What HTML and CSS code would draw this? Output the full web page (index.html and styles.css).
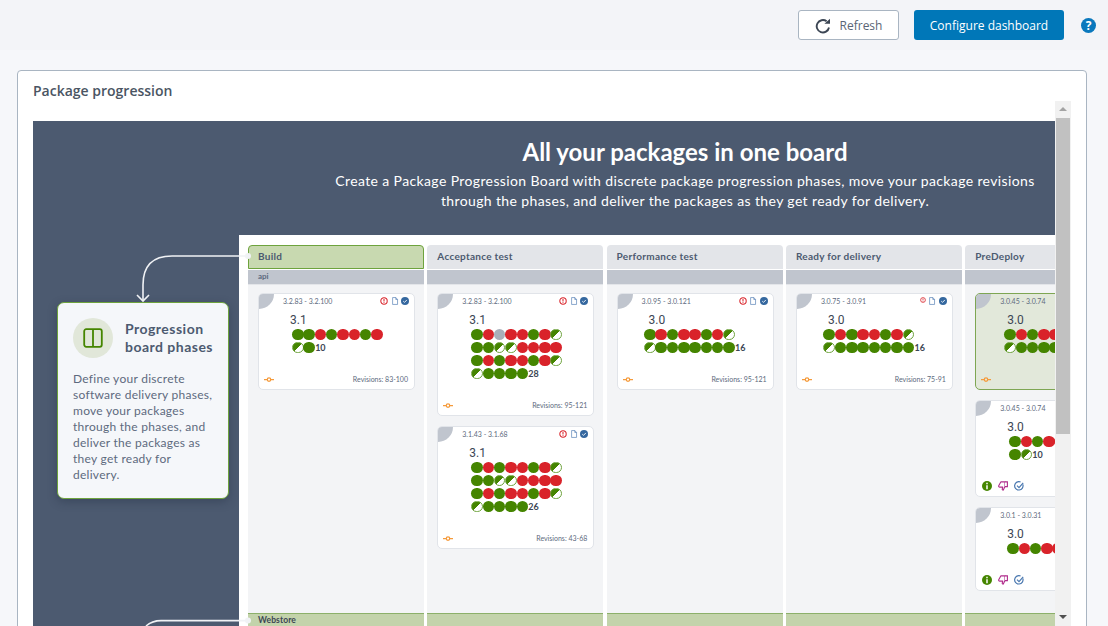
FILE: index.html
```html
<!DOCTYPE html>
<html lang="en">
<head>
<meta charset="utf-8">
<title>Package progression</title>
<link rel="stylesheet" href="styles.css">
</head>
<body>
<svg class="sprites" width="0" height="0" aria-hidden="true">
  <symbol id="i-alert" viewBox="0 0 10 10"><circle cx="5" cy="5" r="4" fill="none" stroke="#d9232a" stroke-width="1.3"/><path d="M5 2.6v3M5 6.6v1" stroke="#d9232a" stroke-width="1.3"/></symbol>
  <symbol id="i-doc" viewBox="0 0 10 10"><path d="M2 .7h4l2.2 2.4v6.2H2zM6 .7v2.4h2.2" fill="#fff" stroke="#4a78b0" stroke-width=".8"/></symbol>
  <symbol id="i-done" viewBox="0 0 10 10"><circle cx="5" cy="5" r="5" fill="#35689f"/><path d="M2.8 5.2l1.6 1.5 2.9-3" fill="none" stroke="#fff" stroke-width="1.1"/></symbol>
  <symbol id="i-track" viewBox="0 0 12 6"><path d="M0 3h3.6M8.4 3H12" stroke="#f59b3c" stroke-width="1.5"/><circle cx="6" cy="3" r="2.1" fill="none" stroke="#f59b3c" stroke-width="1.5"/></symbol>
  <symbol id="i-info" viewBox="0 0 10 10"><circle cx="5" cy="5" r="5" fill="#458500"/><path d="M5 1.8v1.4M5 4.2v4" stroke="#fff" stroke-width="1.5"/></symbol>
  <symbol id="i-down" viewBox="0 0 10 10"><path d="M2.8 .9h4.2v4.7L5.3 9.1c-.9 0-1.2-.6-1-1.3l.4-1.7H1.7C.9 6.1.5 5.5.7 4.8z" fill="#fff" stroke="#b02c8c" stroke-width="1.1" stroke-linejoin="round"/><path d="M7 .9h2.4v4.7H7" fill="#fff" stroke="#b02c8c" stroke-width="1.1"/></symbol>
  <symbol id="i-verify" viewBox="0 0 10 10"><path d="M8.8 3.4A4.2 4.2 0 1 1 6.6 1" fill="none" stroke="#4a78b0" stroke-width="1.2"/><path d="M3 4.6l2 2L9.2 1.8" fill="none" stroke="#4a78b0" stroke-width="1.2"/></symbol>
</svg>

<header class="topbar">
  <button class="btn btn-ghost" type="button">
    <svg class="btn-icon" viewBox="0 0 16 16"><path d="M14 9.5A6.2 6.2 0 1 1 11.6 3.3" fill="none" stroke="#3c4654" stroke-width="1.9"/><path d="M9.4 5.8H15V.7z" fill="#3c4654"/></svg>
    Refresh
  </button>
  <button class="btn btn-primary" type="button">Configure dashboard</button>
  <span class="help">?</span>
</header>

<main class="content">
  <section class="panel">
    <h2 class="panel-title">Package progression</h2>
    <div class="scroller">
      <div class="scroll-area">
        <div class="hero">
          <svg class="connectors" viewBox="0 0 300 505" width="300" height="505" aria-hidden="true">
            <path d="M214 135H139Q110 135 110 164V179" fill="none" stroke="#f0f2f5" stroke-width="1.6"/>
            <path d="M104 174l6 6 6-6" fill="none" stroke="#f0f2f5" stroke-width="1.6"/>
            <circle cx="215" cy="135" r="3" fill="#f0f2f5"/>
            <path d="M214 499.6H128Q119 499.6 113 505" fill="none" stroke="#f0f2f5" stroke-width="1.6"/>
            <circle cx="215" cy="499.6" r="3" fill="#f0f2f5"/>
          </svg>
          <div class="hero-head">
            <h1>All your packages in one board</h1>
            <p>Create a Package Progression Board with discrete package progression phases, move your package revisions through the phases, and deliver the packages as they get ready for delivery.</p>
          </div>
          <div class="hero-body">
            <aside class="callout">
              <div class="callout-head">
                <span class="callout-icon">
                  <svg viewBox="0 0 20 20" width="20" height="20"><rect x="1.2" y="1.2" width="17.6" height="17.6" rx="2" fill="none" stroke="#458500" stroke-width="1.8"/><path d="M10 1.2v17.6" stroke="#458500" stroke-width="1.8"/></svg>
                </span>
                <h3>Progression board phases</h3>
              </div>
              <p>Define your discrete software delivery phases, move your packages through the phases, and deliver the packages as they get ready for delivery.</p>
            </aside>

            <div class="board">
              <div class="phase">
                <div class="phase-head is-active">Build</div>
                <div class="phase-sub">api</div>
                <div class="phase-body">
                  <article class="card">
                    <div class="card-top"><span class="range">3.2.83 - 3.2.100</span><span class="flags"><svg class="fi"><use href="#i-alert"/></svg><svg class="fi"><use href="#i-doc"/></svg><svg class="fi"><use href="#i-done"/></svg></span></div>
                    <div class="ver">3.1</div>
                    <div class="dots">
                      <div class="row"><i class="d g"></i><i class="d g"></i><i class="d r"></i><i class="d g"></i><i class="d r"></i><i class="d r"></i><i class="d g"></i><i class="d r"></i></div>
                      <div class="row"><i class="d h"></i><i class="d g"></i><b>10</b></div>
                    </div>
                    <div class="card-foot"><svg class="track"><use href="#i-track"/></svg><span>Revisions: 83-100</span></div>
                  </article>
                </div>
              </div>

              <div class="phase">
                <div class="phase-head">Acceptance test</div>
                <div class="phase-sub"></div>
                <div class="phase-body">
                  <article class="card">
                    <div class="card-top"><span class="range">3.2.83 - 3.2.100</span><span class="flags"><svg class="fi"><use href="#i-alert"/></svg><svg class="fi"><use href="#i-doc"/></svg><svg class="fi"><use href="#i-done"/></svg></span></div>
                    <div class="ver">3.1</div>
                    <div class="dots">
                      <div class="row"><i class="d g"></i><i class="d r"></i><i class="d n"></i><i class="d r"></i><i class="d r"></i><i class="d g"></i><i class="d r"></i><i class="d h"></i></div>
                      <div class="row"><i class="d g"></i><i class="d g"></i><i class="d h"></i><i class="d h"></i><i class="d r"></i><i class="d r"></i><i class="d r"></i><i class="d r"></i></div>
                      <div class="row"><i class="d g"></i><i class="d r"></i><i class="d g"></i><i class="d r"></i><i class="d r"></i><i class="d g"></i><i class="d r"></i><i class="d h"></i></div>
                      <div class="row"><i class="d h"></i><i class="d g"></i><i class="d g"></i><i class="d g"></i><i class="d g"></i><b>28</b></div>
                    </div>
                    <div class="card-foot"><svg class="track"><use href="#i-track"/></svg><span>Revisions: 95-121</span></div>
                  </article>
                  <article class="card">
                    <div class="card-top"><span class="range">3.1.43 - 3.1.68</span><span class="flags"><svg class="fi"><use href="#i-alert"/></svg><svg class="fi"><use href="#i-doc"/></svg><svg class="fi"><use href="#i-done"/></svg></span></div>
                    <div class="ver">3.1</div>
                    <div class="dots">
                      <div class="row"><i class="d g"></i><i class="d r"></i><i class="d g"></i><i class="d r"></i><i class="d r"></i><i class="d g"></i><i class="d r"></i><i class="d h"></i></div>
                      <div class="row"><i class="d g"></i><i class="d g"></i><i class="d h"></i><i class="d h"></i><i class="d r"></i><i class="d r"></i><i class="d r"></i><i class="d r"></i></div>
                      <div class="row"><i class="d g"></i><i class="d r"></i><i class="d g"></i><i class="d r"></i><i class="d r"></i><i class="d g"></i><i class="d r"></i><i class="d h"></i></div>
                      <div class="row"><i class="d h"></i><i class="d g"></i><i class="d g"></i><i class="d g"></i><i class="d g"></i><b>26</b></div>
                    </div>
                    <div class="card-foot"><svg class="track"><use href="#i-track"/></svg><span>Revisions: 43-68</span></div>
                  </article>
                </div>
              </div>

              <div class="phase">
                <div class="phase-head">Performance test</div>
                <div class="phase-sub"></div>
                <div class="phase-body">
                  <article class="card">
                    <div class="card-top"><span class="range">3.0.95 - 3.0.121</span><span class="flags"><svg class="fi"><use href="#i-alert"/></svg><svg class="fi"><use href="#i-doc"/></svg><svg class="fi"><use href="#i-done"/></svg></span></div>
                    <div class="ver">3.0</div>
                    <div class="dots">
                      <div class="row"><i class="d g"></i><i class="d r"></i><i class="d g"></i><i class="d r"></i><i class="d r"></i><i class="d g"></i><i class="d r"></i><i class="d h"></i></div>
                      <div class="row"><i class="d h"></i><i class="d g"></i><i class="d g"></i><i class="d g"></i><i class="d g"></i><i class="d g"></i><i class="d g"></i><i class="d g"></i><b>16</b></div>
                    </div>
                    <div class="card-foot"><svg class="track"><use href="#i-track"/></svg><span>Revisions: 95-121</span></div>
                  </article>
                </div>
              </div>

              <div class="phase">
                <div class="phase-head">Ready for delivery</div>
                <div class="phase-sub"></div>
                <div class="phase-body">
                  <article class="card">
                    <div class="card-top"><span class="range">3.0.75 - 3.0.91</span><span class="flags"><svg class="fi fi-small"><use href="#i-alert"/></svg><svg class="fi"><use href="#i-doc"/></svg><svg class="fi"><use href="#i-done"/></svg></span></div>
                    <div class="ver">3.0</div>
                    <div class="dots">
                      <div class="row"><i class="d g"></i><i class="d r"></i><i class="d g"></i><i class="d r"></i><i class="d r"></i><i class="d g"></i><i class="d r"></i><i class="d h"></i></div>
                      <div class="row"><i class="d h"></i><i class="d g"></i><i class="d g"></i><i class="d g"></i><i class="d g"></i><i class="d g"></i><i class="d g"></i><i class="d g"></i><b>16</b></div>
                    </div>
                    <div class="card-foot"><svg class="track"><use href="#i-track"/></svg><span>Revisions: 75-91</span></div>
                  </article>
                </div>
              </div>

              <div class="phase">
                <div class="phase-head">PreDeploy</div>
                <div class="phase-sub"></div>
                <div class="phase-body">
                  <article class="card is-selected">
                    <div class="card-top"><span class="range">3.0.45 - 3.0.74</span></div>
                    <div class="ver">3.0</div>
                    <div class="dots dots-start-29">
                      <div class="row"><i class="d g"></i><i class="d r"></i><i class="d g"></i><i class="d r"></i><i class="d r"></i><i class="d g"></i></div>
                      <div class="row"><i class="d h"></i><i class="d g"></i><i class="d g"></i><i class="d g"></i><i class="d g"></i><i class="d g"></i></div>
                    </div>
                    <div class="card-foot"><svg class="track"><use href="#i-track"/></svg></div>
                  </article>
                  <article class="card">
                    <div class="card-top"><span class="range">3.0.45 - 3.0.74</span></div>
                    <div class="ver">3.0</div>
                    <div class="dots dots-start-34">
                      <div class="row"><i class="d g"></i><i class="d r"></i><i class="d g"></i><i class="d r"></i><i class="d r"></i></div>
                      <div class="row"><i class="d g"></i><i class="d h"></i><b>10</b></div>
                    </div>
                    <div class="card-foot card-actions"><svg class="ai"><use href="#i-info"/></svg><svg class="ai"><use href="#i-down"/></svg><svg class="ai"><use href="#i-verify"/></svg></div>
                  </article>
                  <article class="card">
                    <div class="card-top"><span class="range">3.0.1 - 3.0.31</span></div>
                    <div class="ver">3.0</div>
                    <div class="dots dots-start-32">
                      <div class="row"><i class="d g"></i><i class="d r"></i><i class="d g"></i><i class="d r"></i><i class="d r"></i></div>
                    </div>
                    <div class="card-foot card-actions"><svg class="ai"><use href="#i-info"/></svg><svg class="ai"><use href="#i-down"/></svg><svg class="ai"><use href="#i-verify"/></svg></div>
                  </article>
                </div>
              </div>

              <div class="lane-head">Webstore</div>
              <div class="lane-head"></div>
              <div class="lane-head"></div>
              <div class="lane-head"></div>
              <div class="lane-head"></div>
            </div>
          </div>
        </div>
      </div>
      <div class="scrollbar">
        <span class="arrow arrow-up"></span>
        <span class="thumb"></span>
        <span class="track-fill"></span>
        <span class="arrow arrow-down"></span>
      </div>
    </div>
  </section>
</main>
</body>
</html>
```
FILE: styles.css
```css
* { box-sizing: border-box; }
html, body { height: 100%; }
body {
  margin: 0;
  height: 626px;
  overflow: hidden;
  background: #f6f7fa;
  font-family: "Open Sans", "Liberation Sans", sans-serif;
  color: #3c4654;
}
.sprites { display: block; height: 0; }

.topbar {
  height: 50px;
  background: #f3f4f8;
  display: flex;
  align-items: center;
  justify-content: flex-end;
  padding: 0 12px 0 0;
}
.btn {
  height: 30px;
  padding: 1px 0 0;
  border-radius: 3px;
  font: 400 12px/1 "Open Sans", sans-serif;
  display: inline-flex;
  align-items: center;
  justify-content: center;
  cursor: pointer;
}
.btn-ghost {
  width: 101px;
  background: #fff;
  border: 1px solid #a9b5c2;
  color: #5a6675;
  gap: 9px;
  margin-right: 15px;
}
.btn-icon { width: 16px; height: 16px; }
.btn-primary {
  width: 150px;
  background: #0077b8;
  border: 0;
  color: #fff;
  margin-right: 17px;
}
.help {
  width: 15px;
  height: 15px;
  border-radius: 50%;
  background: #0a78bd;
  color: #fff;
  font: 700 12px/15px "Open Sans", sans-serif;
  text-align: center;
}

.content { padding: 20px 20px 0 17px; }
.panel {
  width: 1070px;
  height: 600px;
  background: #fff;
  border: 1px solid #a9b5c2;
  border-radius: 4px;
  padding: 0 15px;
}
.panel-title {
  margin: 0;
  height: 30px;
  font: 600 14px/40px "Open Sans", sans-serif;
  color: #4a5563;
}
.scroller { display: flex; height: 560px; }
.scroll-area { width: 1022px; padding-top: 20px; overflow: hidden; }

.scrollbar {
  width: 16px;
  background: #f1f1f1;
  display: flex;
  flex-direction: column;
  align-items: center;
  height: 525px;
}
.arrow { flex: none; width: 16px; height: 17px; position: relative; }
.arrow::after {
  content: "";
  position: absolute;
  left: 4px;
  top: 6px;
  border-left: 4px solid transparent;
  border-right: 4px solid transparent;
}
.arrow-up::after { border-bottom: 4px solid #a3a3a3; }
.arrow-down::after { border-top: 4px solid #505050; }
.thumb { flex: none; width: 14px; height: 316px; background: #c1c1c1; }
.track-fill { flex: 1; }

.hero {
  position: relative;
  background: #4c5a70;
  height: 520px;
  overflow: hidden;
}
.connectors { position: absolute; left: 0; top: 0; z-index: 2; }
.hero-head {
  margin-left: 282px;
  width: 740px;
  height: 114px;
  padding-top: 16px;
  text-align: center;
  color: #fff;
  font-family: Lato, sans-serif;
}
.hero-head h1 { margin: 0; font: 700 24px/30px Lato, sans-serif; }
.hero-head p { margin: 4px 0 0; padding: 0 15px; font: 400 14px/20px Lato, sans-serif; letter-spacing: .38px; }
.hero-body { display: flex; }

.callout {
  flex: none;
  width: 172px;
  height: 197px;
  margin: 67px 10px 0 24px;
  background: #f5f7fa;
  border: 1px solid #6ea33d;
  border-radius: 7px;
  padding: 15px 15px 0;
  box-shadow: 0 3px 10px rgba(30, 40, 60, .35);
  font-family: Lato, sans-serif;
}
.callout-head { display: flex; align-items: center; gap: 12px; }
.callout-icon {
  flex: none;
  width: 40px;
  height: 40px;
  border-radius: 50%;
  background: #e1e7d9;
  display: flex;
  align-items: center;
  justify-content: center;
}
.callout h3 { margin: 0; font: 700 14px/18px Lato, sans-serif; color: #4c5a70; letter-spacing: .48px; }
.callout p { margin: 13px 0 0; font: 400 12px/16px Lato, sans-serif; color: #5d6a7e; letter-spacing: .27px; }

.board {
  flex: none;
  width: 816px;
  background: #fff;
  padding: 10px 0 0 9px;
  display: grid;
  grid-template-columns: repeat(5, 176px);
  column-gap: 3.3px;
  align-content: start;
  font-family: Lato, sans-serif;
}
.phase { min-width: 0; }
.phase-head {
  height: 24px;
  background: #e3e5e9;
  border-radius: 4px 4px 0 0;
  padding-left: 10px;
  font: 700 10px/23px Lato, sans-serif;
  color: #4c5a70;
  letter-spacing: .28px;
}
.phase-head.is-active { background: #c8d9b0; border: 1px solid #6ea33d; padding-left: 9px; line-height: 21px; }
.phase-sub {
  height: 15px;
  margin-top: 1px;
  background: #c0c5ce;
  padding-left: 10px;
  font: 700 8px/13px Lato, sans-serif;
  color: #5d6a7e;
  border-bottom: 1px solid #e3e5e9;
}
.phase-body {
  height: 328px;
  background: #f3f4f6;
  padding: 8px 9.5px 0 10px;
  display: flex;
  flex-direction: column;
  gap: 10px;
  overflow: hidden;
}
.lane-head {
  height: 20px;
  background: #c3d3ab;
  border-top: 1px solid #8cb06a;
  padding-left: 10px;
  font: 700 8.5px/13px Lato, sans-serif;
  letter-spacing: .1px;
  color: #3c4654;
}

.card {
  position: relative;
  flex: none;
  width: 157px;
  background: #fff;
  border: 1px solid #e1e4e9;
  border-radius: 5px;
  padding-bottom: 4px;
  overflow: hidden;
}
.card::before {
  content: "";
  position: absolute;
  left: 0;
  top: 0;
  width: 15px;
  height: 15px;
  background: #c0c5ce;
  border-bottom-right-radius: 100%;
}
.card.is-selected { background: #e2e8da; border-color: #7ea653; }
.card-top { height: 14px; display: flex; align-items: center; padding: 0 5px 0 24px; }
.range { font: 400 7px/1 Lato, sans-serif; color: #5d6a7e; }
.flags { margin-left: auto; display: flex; gap: 2.5px; align-items: center; }
.fi { width: 8px; height: 8px; }
.fi-small { width: 6px; height: 6px; margin: -2px 0 0 2px; }

.ver {
  height: 15px;
  margin-top: 5px;
  padding-left: 31px;
  font: 400 12px/14px Roboto, sans-serif;
  color: #3c4654;
}
.dots { width: fit-content; margin: 0 auto; padding: 0 0 19px 1.5px; }
.dots-start-29 { margin-left: 26.5px; }
.dots-start-34 { margin-left: 31.5px; }
.dots-start-32 { margin-left: 29.5px; }
.row { display: flex; align-items: center; height: 13px; }
.row b { font: 700 9px/1 Lato, sans-serif; color: #3c4654; margin: 0 2px 0 .5px; }
.d { flex: none; display: block; width: 11.5px; height: 11.5px; border-radius: 50%; margin-right: -.2px; }
.g { background: #458500; }
.r { background: #d9232a; }
.n { background: #a9afba; }
.h { background: linear-gradient(135deg, #458500 50%, #fff 50%); border: 1px solid #6ea33d; }

.card-foot { height: 12px; display: flex; align-items: center; justify-content: space-between; padding: 0 6px 0 5px; }
.card-foot span { font: 400 7px/1 Lato, sans-serif; color: #5d6a7e; }
.track { width: 10px; height: 5px; }
.card-actions { justify-content: flex-start; gap: 6px; padding-left: 6px; }
.ai { width: 10px; height: 10px; }
```
